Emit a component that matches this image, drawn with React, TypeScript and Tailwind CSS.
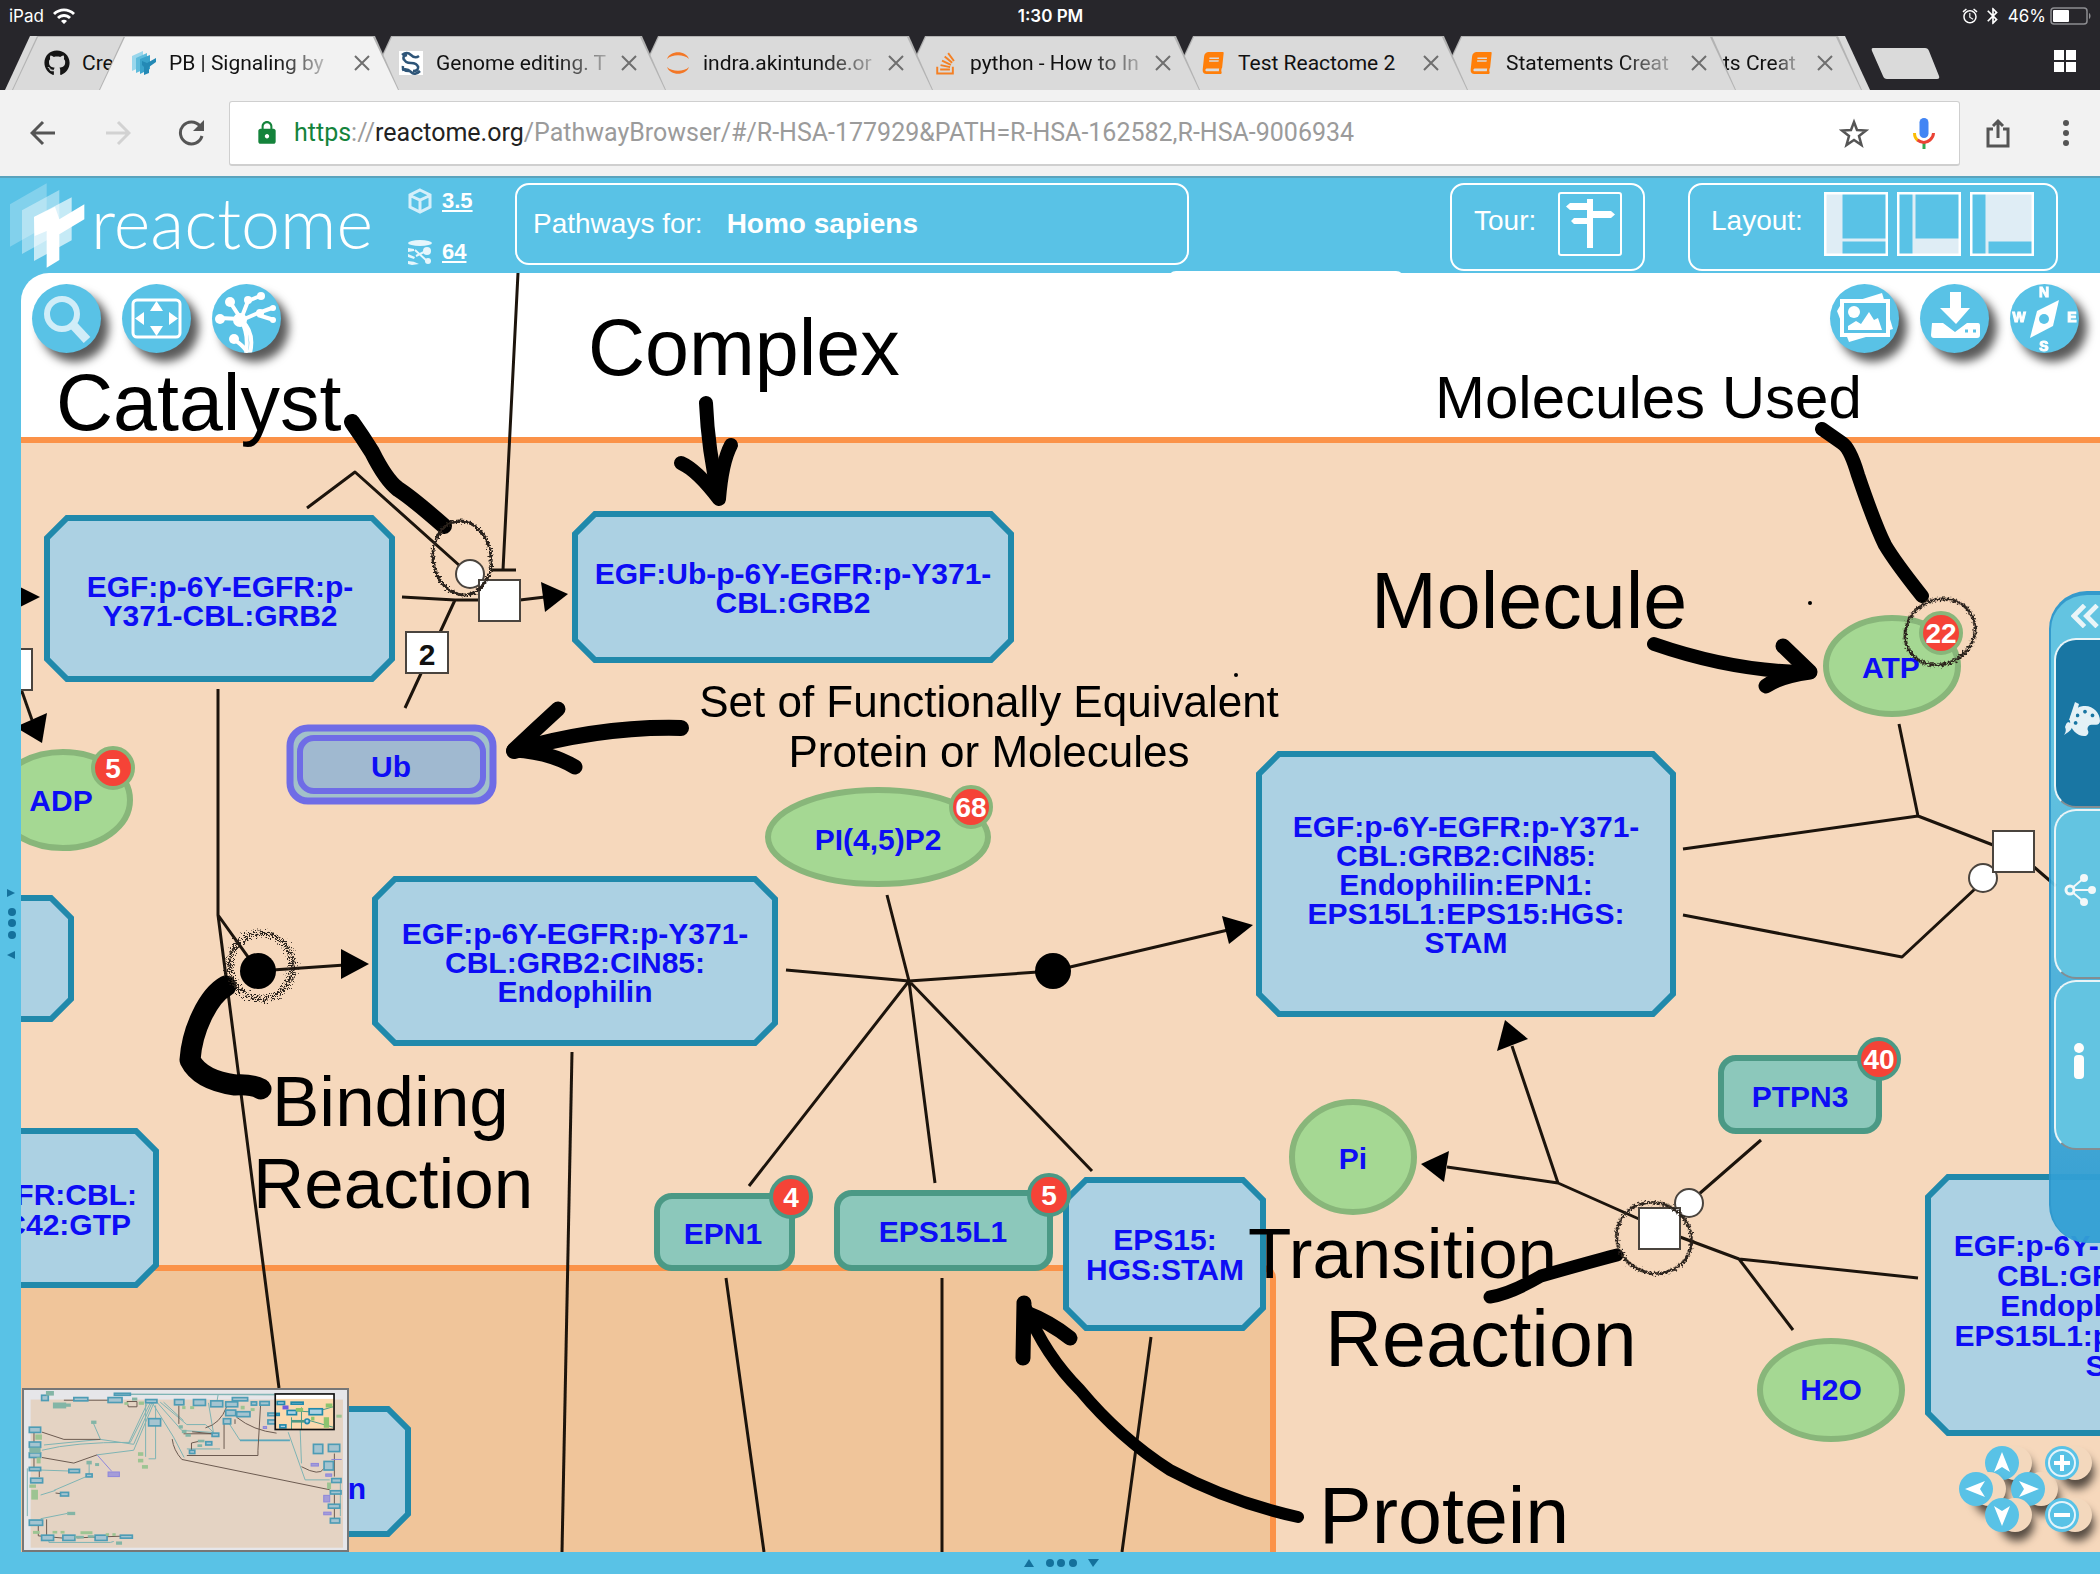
import React from "react";
import { FaGithub, FaStackOverflow, FaBook, FaPalette } from "react-icons/fa";
import { MdAlarm, MdBluetooth, MdLock, MdWifi } from "react-icons/md";

type Pt = [number, number];

/* ---------- Browser chrome ---------- */

function StatusBar() {
  return (
    <div className="flex h-9 items-center justify-between bg-[#27262b] px-2 pb-1 font-['Inter',sans-serif] text-[17px] leading-5 text-white">
      <div className="flex flex-1 items-center gap-2 pl-px">
        <span>iPad</span>
        <MdWifi className="size-6" />
      </div>
      <div className="font-semibold">1:30 PM</div>
      <div className="flex flex-1 items-center justify-end gap-1">
        <MdAlarm className="size-[18px]" />
        <MdBluetooth className="size-5" />
        <span className="pl-px">46%</span>
        <svg className="h-[18px] w-[42px]" viewBox="0 0 42 18" aria-label="Battery">
          <rect x="1" y="1" width="36" height="16" rx="3" fill="none" stroke="#8d8d91" strokeWidth="1.5" />
          <rect x="3" y="3" width="16" height="12" rx="1" fill="#fff" />
          <path d="M39 6c2 1 2 5 0 6z" fill="#8d8d91" />
        </svg>
      </div>
    </div>
  );
}

function CloseGlyph() {
  return (
    <svg className="size-4" viewBox="0 0 16 16" stroke="#6f6f6f" strokeWidth="2" aria-hidden="true">
      <path d="M1 1L15 15M15 1L1 15" />
    </svg>
  );
}

function LayersIcon({ className }: { className: string }) {
  return (
    <svg className={className} viewBox="0 0 26 26" aria-hidden="true">
      <path d="M1 6L12 1V16L1 21Z" fill="#9ad7ec" />
      <path d="M5 8L16 3V18L5 23Z" fill="#5fbcdc" />
      <path d="M9 9L19 5V19L9 24Z" fill="#3aa3cb" />
      <path d="M11 11L16 13L25 8V12L18 17V23L13 25V17L11 15Z" fill="#2489b5" />
    </svg>
  );
}

function HelixIcon() {
  return (
    <svg className="size-6 bg-white" viewBox="0 0 24 24" fill="none" stroke="#2e5578" strokeWidth="2.5" aria-hidden="true">
      <path d="M3 4Q8 0 12 4T20 5M5 9Q3 5 8 4M5 8Q6 12 12 12T19 16M19 15Q20 20 14 20M4 15Q3 20 10 20M3 19Q8 17 12 21T21 20" />
    </svg>
  );
}

function JupyterIcon() {
  return (
    <svg className="size-6" viewBox="0 0 24 24" fill="#f37726" aria-hidden="true">
      <path d="M1 8C4-1 20-1 23 8C18 3 6 3 1 8ZM1 16C4 25 20 25 23 16C18 21 6 21 1 16Z" />
    </svg>
  );
}

interface TabProps {
  title: string;
  icon?: React.ReactNode;
  active?: boolean;
  fade?: boolean;
  covered?: boolean;
  className: string;
}

function Tab({ title, icon, active, fade = true, covered, className }: TabProps) {
  return (
    <div className={"relative h-[54px] w-[300px] shrink-0 " + className}>
      <div className="absolute inset-0 bg-[#b3b3b3] [clip-path:polygon(25px_0,276px_0,100%_100%,0_100%)]" />
      <div
        className={
          "absolute inset-x-px bottom-0 top-px [clip-path:polygon(25px_0,273px_0,100%_100%,0_100%)] " +
          (active ? "bg-[#f2f2f2]" : "bg-[#dadada]")
        }
      />
      <div className={"relative flex h-full items-center pr-[29px] " + (covered ? "pl-[161px]" : "pl-8")}>
        <button aria-label={title} className="flex flex-1 items-center gap-3 text-left">
          {!covered && <span className="flex w-[26px] shrink-0 justify-center">{icon}</span>}
          <span
            className={
              "whitespace-nowrap text-[21px] leading-7 text-[#111] " +
              (fade ? "[mask-image:linear-gradient(to_right,black_70%,rgba(0,0,0,0.25)_100%)]" : "")
            }
          >
            {title}
          </span>
        </button>
        <button aria-label={"Close " + title}>
          <CloseGlyph />
        </button>
      </div>
    </div>
  );
}

function TabStrip() {
  const book = <FaBook className="size-[22px] -skew-x-6 text-[#ff7f0a]" />;
  return (
    <div className="flex h-[54px] items-start justify-between bg-[#27262b] pl-[5px]">
      <div className="flex">
        <div className="h-[54px] w-[300px] shrink-0 bg-[#dadada] [clip-path:polygon(25px_0,100%_0,100%_100%,0_100%)]" />
        <Tab className="-ml-[293px]" title="Cre" fade={false} icon={<FaGithub className="size-[26px] text-[#151515]" />} />
        <Tab className="z-10 -ml-[213px]" active title="PB | Signaling by" icon={<LayersIcon className="size-[26px]" />} />
        <Tab className="z-[9] -ml-[33px]" title="Genome editing. T" icon={<HelixIcon />} />
        <Tab className="z-[8] -ml-[33px]" title="indra.akintunde.or" icon={<JupyterIcon />} />
        <Tab className="z-[7] -ml-[33px]" title="python - How to In" icon={<FaStackOverflow className="size-[25px] text-[#f48024]" />} />
        <Tab className="z-[6] -ml-[32px]" title="Test Reactome 2" fade={false} icon={book} />
        <Tab className="z-[5] -ml-[32px]" title="Statements Creat" icon={book} />
        <Tab className="z-[4] -ml-[174px]" title="ts Creat" covered />
        <div className="-ml-[292px] h-[54px] w-[300px] shrink-0 bg-[#dadada] [clip-path:polygon(0_0,275px_0,100%_100%,0_100%)]" />
        <button aria-label="New tab" className="mt-3 h-[31px] w-[70px]">
          <svg viewBox="0 0 70 31" aria-hidden="true">
            <path d="M2 0H55Q58 0 59 3L69 28Q70 31 67 31H17Q14 31 13 28L2 3Q1 0 3 0Z" fill="#dadada" />
          </svg>
        </button>
      </div>
      <button aria-label="Show all tabs" className="mr-6 mt-[14px] grid size-[22px] grid-cols-2 gap-[2px]">
        <span className="bg-white" />
        <span className="bg-white" />
        <span className="bg-white" />
        <span className="bg-white" />
      </button>
    </div>
  );
}

function Toolbar() {
  return (
    <div className="flex h-[88px] items-center border-b-2 border-[#5aa3bd] bg-[#f2f2f2] pl-[30px] pr-[22px]">
      <button aria-label="Back" className="mr-[49px]">
        <svg className="size-[26px]" viewBox="0 0 26 26" fill="none" stroke="#555" strokeWidth="3" aria-hidden="true">
          <path d="M25 13H2M13 2L2 13L13 24" />
        </svg>
      </button>
      <button aria-label="Forward" className="mr-[47px]">
        <svg className="size-[26px]" viewBox="0 0 26 26" fill="none" stroke="#d2d2d2" strokeWidth="3" aria-hidden="true">
          <path d="M1 13H24M13 2L24 13L13 24" />
        </svg>
      </button>
      <button aria-label="Reload" className="mr-[25px]">
        <svg className="size-[26px]" viewBox="0 0 26 26" fill="none" aria-hidden="true">
          <path d="M22 6A11 11 0 1 0 24 16" stroke="#555" strokeWidth="3" />
          <path d="M26 0V11H15Z" fill="#555" />
        </svg>
      </button>
      <div className="relative flex h-[65px] flex-1 items-center rounded-[3px] border border-b-2 border-[#cfcfcf] bg-white pl-6 pr-[22px]">
        <MdLock className="mr-[14px] size-[26px] text-[#14833b]" />
        <span className="text-[25px] leading-8 text-[#9b9b9b]">
          <span className="text-[#14833b]">https</span>://<span className="text-[#222]">reactome.org</span>
          /PathwayBrowser/#/R-HSA-177929&amp;PATH=R-HSA-162582,R-HSA-9006934
        </span>
        <input aria-label="Address" className="absolute inset-y-0 left-16 right-36 bg-transparent outline-none" />
        <button aria-label="Bookmark" className="ml-auto mr-[42px]">
          <svg className="size-[30px]" viewBox="0 0 30 30" aria-hidden="true">
            <path d="M15 4L18 12L27 12.500L20 18L22.500 27L15 22L7.500 27L10 18L3 12.500L12 12Z" fill="none" stroke="#555" strokeWidth="2.500" />
          </svg>
        </button>
        <button aria-label="Voice search">
          <svg className="h-8 w-[26px]" viewBox="0 0 26 32" fill="none" aria-hidden="true">
            <rect x="8.500" y="1" width="9" height="20" rx="4.500" fill="#4285f4" />
            <path d="M13 26V32" stroke="#34a853" strokeWidth="3" />
            <path d="M3.500 16Q3.500 21 7 23.500" stroke="#fbbc05" strokeWidth="3" />
            <path d="M6.500 23Q13 28 19 23Q22.500 20 22.500 16" stroke="#ea4335" strokeWidth="3" />
          </svg>
        </button>
      </div>
      <button aria-label="Share" className="ml-[26px] mr-[44px]">
        <svg className="h-[30px] w-6" viewBox="0 0 24 30" fill="none" stroke="#555" strokeWidth="3" aria-hidden="true">
          <path d="M7 11H2V28H22V11H17M12 20V4M7 8L12 3L17 8" />
        </svg>
      </button>
      <button aria-label="Menu" className="flex w-6 flex-col items-center gap-[4px]">
        <span className="size-[6px] rounded-full bg-[#555]" />
        <span className="size-[6px] rounded-full bg-[#555]" />
        <span className="size-[6px] rounded-full bg-[#555]" />
      </button>
    </div>
  );
}

/* ---------- Reactome header ---------- */

function LayoutGlyph({ active }: { active: "left" | "bottom" | "main" }) {
  return (
    <svg className="size-16" viewBox="0 0 64 64" fill="none" aria-hidden="true">
      <rect x="1" y="1" width="16" height="62" fill={active === "left" ? "#dfedf5" : "none"} />
      <rect x="17" y="1" width="46" height="47" fill={active === "main" ? "#dfedf5" : "none"} />
      <rect x="17" y="49" width="46" height="14" fill={active === "bottom" ? "#dfedf5" : "none"} />
      <path d="M17 0V64M17 48H64" stroke="#dfedf5" strokeWidth="3" />
      <rect x="1" y="1" width="62" height="62" stroke="#fff" strokeWidth="3" />
    </svg>
  );
}

function Header() {
  return (
    <header className="flex h-[95px] items-start bg-[#59c2e6] pl-[10px] pr-[42px] pt-[5px] text-[28px] leading-8 text-white">
      <a href="#home" aria-label="reactome" className="flex w-[386px] items-start">
        <svg className="h-[86px] w-[75px]" viewBox="30 21 225 258" fill="#fff" aria-hidden="true">
          <path d="M30 85L140 22V150L30 212Z" opacity=".25" />
          <path d="M66 103L178 42V172L66 234Z" opacity=".4" />
          <path d="M102 123L215 64V193L102 255Z" opacity=".65" />
          <path d="M102 123L165 92L178 130L253 85V130L178 175V252L140 275V165L104 180Z" />
        </svg>
        <span className="pl-[6px] font-['Lato',sans-serif] text-[70px] font-light leading-[78px]">reactome</span>
      </a>
      <div className="flex w-[119px] flex-col gap-[23px] pl-[11px] pt-[4px] text-[22px] font-bold leading-7">
        <div className="flex items-center gap-[9px]">
          <svg className="size-[26px]" viewBox="0 0 26 26" fill="none" stroke="#d5effa" strokeWidth="3" aria-hidden="true">
            <path d="M13 2L23 7V19L13 24L3 19V7ZM4 8L13 12L22 8M13 12V23" />
          </svg>
          <a href="#version" className="underline">3.5</a>
        </div>
        <div className="flex items-center gap-[9px]">
          <svg className="size-[26px]" viewBox="0 0 26 26" fill="#e6f6fc" aria-hidden="true">
            <ellipse cx="13" cy="4" rx="12" ry="3" />
            <circle cx="20" cy="12" r="4" />
            <circle cx="21" cy="22" r="3" />
            <path d="M1 9L7 10V12L1 13ZM1 15L8 18L7 20L1 18ZM1 22Q7 22 12 25L5 26L1 25Z" />
            <path d="M8 11L20 22M19 12L9 17" stroke="#e6f6fc" strokeWidth="2" />
          </svg>
          <a href="#release" className="underline">64</a>
        </div>
      </div>
      <div className="flex h-[82px] w-[674px] items-center gap-[24px] rounded-[14px] border-2 border-white pl-[16px]">
        <span>Pathways for:</span>
        <b>Homo sapiens</b>
      </div>
      <div className="ml-auto flex h-[88px] w-[195px] items-start rounded-[14px] border-2 border-white pl-[22px] pt-[7px]">
        <span className="w-[84px] pt-[13px]">Tour:</span>
        <button aria-label="Start tour" className="size-16 rounded-[3px] border-2 border-white">
          <svg viewBox="0 0 60 60" fill="#fff" aria-hidden="true">
            <path d="M27 5H33V54H27ZM10 9H27V16H10L6 12.500ZM33 17H51L55 20.500L51 24H33ZM14 24H27V30H14L11 27Z" />
          </svg>
        </button>
      </div>
      <div className="ml-[43px] flex h-[88px] w-[370px] items-start rounded-[14px] border-2 border-white pl-[21px] pt-[7px]">
        <span className="w-[113px] pt-[13px]">Layout:</span>
        <div className="flex gap-[9px]">
          <button aria-label="Toggle side panel"><LayoutGlyph active="left" /></button>
          <button aria-label="Toggle details panel"><LayoutGlyph active="bottom" /></button>
          <button aria-label="Toggle viewport"><LayoutGlyph active="main" /></button>
        </div>
      </div>
    </header>
  );
}

/* ---------- Pathway diagram ---------- */

function Label({ x, y, lines, gap = 29, anchor = "middle" }: { x: number; y: number; lines: string[]; gap?: number; anchor?: "start" | "middle" | "end" }) {
  return (
    <g className="text-[30px] font-bold" fill="#0d0df5" textAnchor={anchor}>
      {lines.map((line, i) => (
        <text key={line} x={x} y={y + i * gap}>{line}</text>
      ))}
    </g>
  );
}

function Complex({ l, t, r, b }: { l: number; t: number; r: number; b: number }) {
  const c = 20;
  const [x1, y1, x2, y2] = [l + 3, t + 3, r - 3, b - 3];
  const pts: Pt[] = [[x1 + c, y1], [x2 - c, y1], [x2, y1 + c], [x2, y2 - c], [x2 - c, y2], [x1 + c, y2], [x1, y2 - c], [x1, y1 + c]];
  return <polygon points={pts.join(" ")} fill="#acd1e3" stroke="#2089ab" strokeWidth="6" />;
}

function Chemical({ cx, cy, rx, ry }: { cx: number; cy: number; rx: number; ry: number }) {
  return <ellipse cx={cx} cy={cy} rx={rx - 3} ry={ry - 3} fill="#a5d893" stroke="#88b67a" strokeWidth="6" />;
}

function Protein({ l, t, r, b }: { l: number; t: number; r: number; b: number }) {
  return <rect x={l + 3} y={t + 3} width={r - l - 6} height={b - t - 6} rx="15" fill="#8cc8bb" stroke="#4b9985" strokeWidth="6" />;
}

function Badge({ cx, cy, n, ring = "#88b67a" }: { cx: number; cy: number; n: number; ring?: string }) {
  return (
    <g>
      <circle cx={cx} cy={cy} r="20" fill="#f54337" stroke={ring} strokeWidth="4" />
      <text x={cx} y={cy + 10} textAnchor="middle" fill="#fff" className="text-[28px] font-bold">{n}</text>
    </g>
  );
}

const edges = [
  "M518 273L503 570M491 570H516",
  "M307 508L355 472L460 566",
  "M402 597L455 600H520L545 597M455 600L405 708",
  "M20 686L32 720",
  "M218 689V915L279 1388M218 915L258 971L345 965",
  "M572 1052L562 1552",
  "M786 970L909 981L1053 971L1228 930M887 895L909 981M909 981L749 1186M909 981L935 1183M909 981L1092 1171",
  "M726 1278L764 1552M942 1278V1552M1151 1337L1122 1552",
  "M1683 849L1918 816L1993 845M1899 724L1918 816M2034 867L2056 886",
  "M1976 888L1902 957L1683 915",
  "M1512 1046L1558 1183L1639 1219M1447 1167L1558 1183",
  "M1699 1194L1761 1140M1680 1237L1739 1259L1918 1278M1739 1259L1793 1330",
];

const arrowHeads = [
  "M541 582L545 612L568 594Z",
  "M10 582V612L40 597Z",
  "M47 713L15 727L42 743Z",
  "M341 949V979L369 964Z",
  "M1222 916L1229 944L1253 925Z",
  "M1505 1020L1497 1051L1528 1039Z",
  "M1421 1164L1449 1151L1444 1182Z",
];

const inkStrokes: { d: string; w: number }[] = [
  { d: "M352 422Q362 436 372 452Q386 480 398 489Q412 498 444 526", w: 16 },
  { d: "M706 403Q708 450 719 497", w: 14 },
  { d: "M681 463Q697 470 719 499M731 445Q722 462 719 499", w: 14 },
  { d: "M681 728Q600 726 514 751", w: 16 },
  { d: "M558 709Q535 730 514 750Q550 752 575 767", w: 15 },
  { d: "M1822 429L1842 443Q1850 448 1858 475Q1875 525 1885 545Q1895 562 1922 596", w: 14 },
  { d: "M1654 644Q1735 672 1810 672", w: 14 },
  { d: "M1783 646L1810 672Q1780 676 1766 686", w: 15 },
  { d: "M226 986C208 996 192 1030 190 1060Q200 1080 235 1085Q252 1084 261 1089", w: 21 },
  { d: "M1490 1297Q1510 1294 1541 1276Q1590 1262 1617 1255", w: 13 },
  { d: "M1298 1517Q1230 1502 1170 1470Q1120 1438 1080 1390Q1045 1355 1026 1308", w: 12 },
  { d: "M1024 1303L1023 1358M1024 1312Q1050 1322 1070 1338", w: 15 },
];

function PathwayDiagram() {
  return (
    <svg
      className="absolute inset-0 size-full"
      viewBox="21 273 2079 1279"
      preserveAspectRatio="xMinYMin slice"
      role="img"
      aria-label="Signaling by EGFR pathway diagram"
    >
      <defs>
        <filter id="scribble" x="-20%" y="-20%" width="140%" height="140%">
          <feTurbulence type="fractalNoise" baseFrequency="0.5" numOctaves="2" seed="4" />
          <feDisplacementMap in="SourceGraphic" scale="7" xChannelSelector="R" yChannelSelector="G" />
        </filter>
        <filter id="charcoal" x="-20%" y="-20%" width="140%" height="140%">
          <feTurbulence type="fractalNoise" baseFrequency="0.7" numOctaves="2" seed="9" />
          <feDisplacementMap in="SourceGraphic" scale="18" xChannelSelector="R" yChannelSelector="G" />
        </filter>
      </defs>

      <rect x="0" y="440" width="2120" height="1200" fill="#f6d8bc" stroke="#fb9248" strokeWidth="6" />
      <rect x="0" y="1268" width="1273" height="340" rx="10" fill="#f0c59a" stroke="#fb9248" strokeWidth="6" />

      <g fill="none" stroke="#1c140c" strokeWidth="3" strokeLinejoin="round">
        {edges.map((d) => <path key={d} d={d} />)}
      </g>
      <g fill="#000">
        {arrowHeads.map((d) => <path key={d} d={d} />)}
        <circle cx="258" cy="971" r="18" />
        <circle cx="1053" cy="971" r="18" />
      </g>
      <g fill="#fff" stroke="#4a443e" strokeWidth="2">
        <circle cx="470" cy="574" r="14" />
        <rect x="479" y="580" width="41" height="41" />
        <rect x="406" y="632" width="42" height="41" />
        <rect x="-8" y="649" width="40" height="41" />
        <circle cx="1983" cy="878" r="14" />
        <rect x="1993" y="831" width="41" height="41" />
        <circle cx="1689" cy="1203" r="14" />
        <rect x="1639" y="1208" width="41" height="41" />
      </g>
      <text x="427" y="665" textAnchor="middle" className="text-[30px] font-bold" fill="#111">2</text>

      <Complex l={44} t={515} r={395} b={682} />
      <Label x={220} y={597} lines={["EGF:p-6Y-EGFR:p-", "Y371-CBL:GRB2"]} />
      <Complex l={572} t={511} r={1014} b={663} />
      <Label x={793} y={584} lines={["EGF:Ub-p-6Y-EGFR:p-Y371-", "CBL:GRB2"]} />
      <Complex l={372} t={876} r={778} b={1046} />
      <Label x={575} y={944} lines={["EGF:p-6Y-EGFR:p-Y371-", "CBL:GRB2:CIN85:", "Endophilin"]} />
      <Complex l={1256} t={751} r={1676} b={1017} />
      <Label x={1466} y={837} lines={["EGF:p-6Y-EGFR:p-Y371-", "CBL:GRB2:CIN85:", "Endophilin:EPN1:", "EPS15L1:EPS15:HGS:", "STAM"]} />
      <Complex l={1925} t={1174} r={2330} b={1436} />
      <Label x={2127} y={1256} gap={30} lines={["EGF:p-6Y-EGFR:p-Y371-", "CBL:GRB2:CIN85:", "Endophilin:EPN1:", "EPS15L1:p-EPS15:HGS:", "STAM"]} />
      <Complex l={-120} t={895} r={74} b={1022} />
      <Complex l={-120} t={1128} r={159} b={1288} />
      <Label x={137} y={1205} gap={30} lines={["EGFR:CBL:"]} anchor="end" />
      <Label x={131} y={1235} lines={["CDC42:GTP"]} anchor="end" />
      <Complex l={100} t={1406} r={411} b={1537} />
      <Label x={366} y={1499} lines={["Endophilin"]} anchor="end" />

      <Protein l={654} t={1193} r={795} b={1271} />
      <Label x={723} y={1244} lines={["EPN1"]} />
      <Protein l={834} t={1190} r={1053} b={1271} />
      <Label x={943} y={1242} lines={["EPS15L1"]} />
      <Protein l={1718} t={1055} r={1882} b={1134} />
      <Label x={1800} y={1107} lines={["PTPN3"]} />
      <Complex l={1063} t={1177} r={1266} b={1331} />
      <Label x={1165} y={1250} gap={30} lines={["EPS15:", "HGS:STAM"]} />
      <Badge cx={791} cy={1197} n={4} ring="#4b9985" />
      <Badge cx={1049} cy={1195} n={5} ring="#4b9985" />
      <Badge cx={1879} cy={1059} n={40} ring="#4b9985" />

      <rect x="290" y="728" width="203" height="73" rx="18" fill="#a2c1c9" stroke="#6f6ce6" strokeWidth="7" />
      <rect x="300" y="738" width="183" height="53" rx="14" fill="#a0b9d0" stroke="#6f6ce6" strokeWidth="6" />
      <Label x={391} y={777} lines={["Ub"]} />

      <Chemical cx={63} cy={800} rx={70} ry={51} />
      <Label x={61} y={811} lines={["ADP"]} />
      <Badge cx={113} cy={768} n={5} />
      <Chemical cx={878} cy={837} rx={113} ry={50} />
      <Label x={878} y={850} lines={["PI(4,5)P2"]} />
      <Badge cx={971} cy={807} n={68} />
      <Chemical cx={1892} cy={666} rx={69} ry={51} />
      <Label x={1891} y={678} lines={["ATP"]} />
      <Badge cx={1941} cy={633} n={22} />
      <Chemical cx={1353} cy={1157} rx={64} ry={58} />
      <Label x={1353} y={1169} lines={["Pi"]} />
      <Chemical cx={1831} cy={1390} rx={74} ry={52} />
      <Label x={1831} y={1400} lines={["H2O"]} />

      <g fill="none" stroke="#000" strokeLinecap="round" strokeLinejoin="round">
        {inkStrokes.map(({ d, w }) => <path key={d} d={d} strokeWidth={w} />)}
      </g>
      <g fill="none" stroke="#2b221b" strokeWidth="3" filter="url(#scribble)">
        <ellipse cx="462" cy="558" rx="29" ry="37" transform="rotate(-8 462 558)" />
        <ellipse cx="1940" cy="632" rx="36" ry="32" transform="rotate(-30 1940 632)" />
        <ellipse cx="1654" cy="1238" rx="38" ry="35" transform="rotate(25 1654 1238)" />
      </g>
      <g fill="none" stroke="#2b221b" filter="url(#charcoal)">
        <ellipse cx="261" cy="966" rx="31" ry="33" strokeWidth="3" />
        <ellipse cx="261" cy="966" rx="34" ry="33" strokeWidth="1" />
      </g>
      <g fill="#000">
        <circle cx="1236" cy="675" r="2" />
        <circle cx="1810" cy="603" r="2" />
        <circle cx="366" cy="1109" r="2" />
        <g className="text-[79px]">
          <text x="56" y="430">Catalyst</text>
          <text x="588" y="375">Complex</text>
          <text x="1371" y="628">Molecule</text>
          <text x="1325" y="1366">Reaction</text>
          <text x="1319" y="1543">Protein</text>
        </g>
        <text x="1435" y="418" className="text-[60px]">Molecules Used</text>
        <g className="text-[44px]" textAnchor="middle">
          <text x="989" y="717">Set of Functionally Equivalent</text>
          <text x="989" y="767">Protein or Molecules</text>
        </g>
        <g className="text-[71px]">
          <text x="272" y="1126">Binding</text>
          <text x="253" y="1208">Reaction</text>
          <text x="1248" y="1278">Transition</text>
        </g>
      </g>
    </svg>
  );
}

/* ---------- Minimap ---------- */

const miniBlue: [number, number, number, number][] = [
  [123, 73, 20, 16], [220, 80, 42, 10], [323, 80, 42, 15], [342, 67, 48, 6], [436, 86, 34, 10], [445, 144, 36, 22], [523, 86, 28, 16],
  [580, 86, 36, 18], [632, 90, 36, 18], [677, 93, 36, 15], [697, 80, 46, 10], [677, 118, 30, 17], [710, 123, 40, 15], [670, 144, 22, 16],
  [754, 93, 16, 10], [780, 92, 28, 11], [804, 127, 32, 8], [804, 148, 36, 12], [86, 170, 34, 16], [86, 215, 34, 16], [86, 248, 34, 14],
  [86, 292, 34, 10], [90, 325, 36, 14], [86, 452, 40, 16], [205, 298, 32, 10], [257, 312, 18, 9], [180, 368, 24, 11], [123, 498, 36, 16],
  [187, 498, 36, 16], [284, 498, 36, 16], [360, 498, 36, 9], [636, 188, 20, 10], [617, 214, 18, 10], [568, 240, 16, 10],
  [941, 222, 28, 28], [986, 222, 34, 22], [973, 274, 28, 26], [996, 326, 28, 12], [992, 363, 32, 10], [986, 404, 34, 12], [992, 447, 28, 14],
];
const miniGreen: [number, number, number, number][] = [
  [546, 106, 10, 9], [570, 106, 12, 9], [722, 105, 12, 11], [752, 112, 12, 9], [104, 192, 20, 16], [108, 262, 12, 18], [413, 246, 16, 11],
  [413, 266, 16, 11], [425, 285, 18, 11], [86, 344, 20, 10], [92, 360, 20, 30], [97, 485, 20, 9], [156, 485, 14, 8], [180, 485, 12, 8],
  [240, 486, 36, 9], [316, 492, 10, 8], [336, 492, 10, 8], [415, 92, 16, 10], [372, 94, 12, 8], [982, 338, 12, 20], [1010, 132, 16, 9],
];
const miniTeal: [number, number, number, number][] = [
  [136, 60, 24, 14], [157, 95, 40, 18], [195, 98, 16, 10], [272, 150, 16, 10], [258, 272, 16, 11], [284, 279, 12, 9], [200, 427, 24, 10],
  [536, 164, 12, 10], [545, 178, 14, 10], [556, 190, 16, 9], [593, 208, 20, 8], [592, 222, 14, 8], [347, 517, 18, 10], [222, 500, 28, 8],
  [262, 498, 18, 8], [395, 80, 16, 9], [86, 232, 34, 16],
];

function Minimap() {
  return (
    <div className="absolute bottom-0 left-px">
      <svg className="h-[164px] w-[327px] border-2 border-[#777] bg-[#e6e6e9]" viewBox="70 57 972 486" preserveAspectRatio="none" role="img" aria-label="Pathway thumbnail">
        <rect x="90" y="86" width="940" height="450" fill="#e4d3c3" />
        <g fill="none" stroke="#7db3b3" strokeWidth="3">
          <path d="M124 240Q220 215 390 216L450 96M130 224L300 207L400 222L455 96M290 254L400 240L460 98M384 220L440 100M466 104V266H445M436 98V260M456 96L520 200L552 262M470 94L545 180L640 186M480 94L560 162H616L640 186M490 94L550 150M340 517L330 520H145V510M116 300L204 303M160 362L262 318M120 376L165 362M120 448L200 432M278 156L300 207M266 318V282M688 160L720 210M720 210H870M865 185L916 330H990M900 150L905 280M345 70H870M390 70L870 72M654 72L650 96M625 96L640 186M80 295V440M660 236H560M1022 340V440" />
        </g>
        <path d="M720 210H870" stroke="#5ba7bb" strokeWidth="5" />
        <g fill="none" stroke="#6b5a50" strokeWidth="3">
          <path d="M124 185L190 207H300M124 262L220 279L290 254M190 88H330M536 104V160M516 206Q520 240 545 268L990 360M550 190H636M560 256H774V240L782 100M616 172Q660 160 680 108M705 146V160M710 140Q760 180 830 188M672 236V160M100 186V215M100 262V292M116 300V322M138 450V498M113 470V500L200 508M230 506L390 500M574 240V218L600 212M905 290Q960 320 972 296M1004 250V320M1004 370V450M380 92H410V108H384ZM165 370L200 374M576 184L636 190" />
        </g>
        <path d="M290 254L334 304M995 268H1026" stroke="#8d86dc" strokeWidth="3" />
        <g fill="#a5c4d0" stroke="#4d9cb5" strokeWidth="5">
          {miniBlue.map(([x, y, w, h]) => <rect key={x + "-" + y} x={x} y={y} width={w} height={h} />)}
        </g>
        <g fill="#9cc492">
          {miniGreen.map(([x, y, w, h]) => <rect key={x + "-" + y} x={x} y={y} width={w} height={h} />)}
        </g>
        <g fill="#83b5a6">
          {miniTeal.map(([x, y, w, h]) => <rect key={x + "-" + y} x={x} y={y} width={w} height={h} />)}
        </g>
        <g fill="#a49cd8" stroke="#8d86dc" strokeWidth="3">
          <rect x="323" y="306" width="34" height="14" />
          <rect x="934" y="280" width="22" height="8" />
          <rect x="790" y="168" width="10" height="6" />
          <rect x="978" y="312" width="18" height="7" />
          <rect x="972" y="377" width="18" height="20" />
          <rect x="972" y="428" width="22" height="8" />
        </g>
        <rect x="827" y="70" width="175" height="107" fill="#fbd9ae" />
        <rect x="827" y="70" width="175" height="14" fill="#fff" />
        <path d="M905 110V177M875 140V177M930 150L1000 170M880 120L940 124M966 118L1000 108" fill="none" stroke="#4b9985" strokeWidth="3" />
        <g fill="#acd1e3" stroke="#2089ab" strokeWidth="5">
          <rect x="832" y="92" width="22" height="9" />
          <rect x="874" y="94" width="36" height="6" />
          <rect x="862" y="119" width="28" height="13" />
          <rect x="928" y="114" width="40" height="18" />
          <rect x="830" y="128" width="8" height="6" />
          <rect x="840" y="163" width="18" height="9" />
          <circle cx="922" cy="152" r="7" />
        </g>
        <path d="M888 112H910V122H888ZM978 98H998V110H978ZM934 138H944V150H934ZM972 140H988V172H972Z" fill="#8cc46e" />
        <path d="M876 148H914V156H876Z" fill="#4b9985" />
        <rect x="848" y="104" width="18" height="12" fill="#6f5ce0" />
        <rect x="826" y="69" width="177" height="108" fill="none" stroke="#111" strokeWidth="5" />
      </svg>
    </div>
  );
}

/* ---------- Floating controls ---------- */

function RoundButton({ label, children }: { label: string; children: React.ReactNode }) {
  return (
    <button aria-label={label} className="size-[69px] overflow-hidden rounded-full bg-[#59c2e6] shadow-[8px_9px_10px_rgba(0,0,0,0.65)]">
      <svg viewBox="0 0 69 69" fill="none" aria-hidden="true">{children}</svg>
    </button>
  );
}

function TopControls() {
  return (
    <>
      <div className="absolute left-[11px] top-[11px] flex gap-[21px]">
        <RoundButton label="Search">
          <circle cx="30" cy="30" r="15" stroke="#d0edf8" strokeWidth="6" />
          <path d="M42 42L55 56" stroke="#d0edf8" strokeWidth="9" />
        </RoundButton>
        <RoundButton label="Fit to screen">
          <rect x="11" y="16" width="47" height="37" rx="4" stroke="#fff" strokeWidth="3" />
          <path d="M34.500 17L41 27H28ZM34.500 52L41 42H28ZM13 34.500L22 28V41ZM56 34.500L47 28V41Z" fill="#fff" />
        </RoundButton>
        <RoundButton label="Open pathway overview">
          <path d="M34 69Q37 50 29 36M36 69Q30 60 22 56M29 35L18 18M29 35L36 17L48 12M29 35L7 34M30 36L46 29L60 24M46 31L62 36M29 36Q43 48 38 69" stroke="#fff" strokeWidth="4" />
          <g fill="#fff">
            <circle cx="18" cy="18" r="5" /><circle cx="36" cy="16" r="4" /><circle cx="49" cy="12" r="4" /><circle cx="8" cy="35" r="5" />
            <circle cx="28" cy="36" r="7" /><circle cx="48" cy="29" r="4" /><circle cx="61" cy="24" r="3" /><circle cx="61" cy="36" r="3" /><circle cx="22" cy="55" r="5" />
          </g>
        </RoundButton>
      </div>
      <div className="absolute right-[21px] top-[11px] flex gap-[21px]">
        <RoundButton label="Illustrations">
          <path d="M10 22L52 9L63 45L19 58L7 27Z" fill="#fff" />
          <rect x="12" y="17" width="46" height="34" fill="#59c2e6" stroke="#fff" strokeWidth="4" />
          <circle cx="24" cy="28" r="6" fill="#fff" />
          <path d="M18 46V42L26 37L31 40L39 28L44 36L48 34L52 46Z" fill="#fff" />
        </RoundButton>
        <RoundButton label="Download">
          <path d="M30 8H41V24H50L36 40L20 24H30Z" fill="#fff" />
          <path d="M12 39H23L35 48L47 39H58Q60 39 60 42V51Q60 54 57 54H14Q11 54 11 51Z" fill="#fff" />
          <path d="M45 47H48M53 47H56" stroke="#59c2e6" strokeWidth="3" />
        </RoundButton>
        <RoundButton label="Compass">
          <path d="M49 16L43 42L20 54L27 27Z" fill="#fff" />
          <circle cx="34" cy="35" r="5" fill="#59c2e6" />
          <g fill="#fff" stroke="#fff" textAnchor="middle" className="text-[14px] font-bold">
            <text x="34" y="13">N</text><text x="34" y="67">S</text><text x="9" y="38">W</text><text x="62" y="38">E</text>
          </g>
        </RoundButton>
      </div>
    </>
  );
}

const padButtons = [
  { label: "Move up", cell: "col-start-2 row-start-1", d: "M17 6L25 26L17 21L9 26Z" },
  { label: "Move left", cell: "col-start-1 row-start-2", d: "M6 17L26 9L21 17L26 25Z" },
  { label: "Move right", cell: "col-start-3 row-start-2", d: "M28 17L8 9L13 17L8 25Z" },
  { label: "Move down", cell: "col-start-2 row-start-3", d: "M17 28L25 8L17 13L9 8Z" },
  { label: "Zoom in", cell: "col-start-4 row-start-1", d: "M15 9H19V15H25V19H19V25H15V19H9V15H15Z" },
  { label: "Zoom out", cell: "col-start-4 row-start-3", d: "M9 15H25V19H9Z" },
];

function NavPad() {
  return (
    <div className="absolute bottom-6 right-[17px] grid grid-cols-[26px_26px_26px_42px] grid-rows-[26px_26px_26px] place-items-center">
      {padButtons.map(({ label, cell, d }) => (
        <button
          key={label}
          aria-label={label}
          className={"size-[34px] rounded-full bg-[#59c2e6] shadow-[13px_0_0_#f3d8bd,15px_9px_8px_rgba(0,0,0,0.65)] " + cell}
        >
          <svg viewBox="0 0 34 34" fill="#fff" aria-hidden="true">
            {label.startsWith("Zoom") && <circle cx="17" cy="17" r="13" fill="none" stroke="#e4f4fb" strokeWidth="2" />}
            <path d={d} />
          </svg>
        </button>
      ))}
    </div>
  );
}

function SidePanel() {
  const tab = "flex h-[170px] w-full items-center pl-2 rounded-l-[22px] border-2 border-r-0 border-[#e9f6fb] border-b-[#7d8a90]";
  return (
    <div className="absolute right-0 top-[318px] flex h-[652px] w-[51px] flex-col gap-px rounded-l-[38px] border-l-2 border-t-4 border-[#2a97cd] bg-linear-to-b from-[#5cc3e3] from-20% via-[#4fb6de] via-50% to-[#32a0d5] to-90% pl-[3px] opacity-95">
      <button aria-label="Expand panel" className="flex h-[42px] items-center pl-[17px]">
        <svg className="h-6 w-[30px]" viewBox="0 0 30 24" fill="none" stroke="#eaf7fc" strokeWidth="5" aria-hidden="true">
          <path d="M14 1L3 12L14 23M27 1L16 12L27 23" />
        </svg>
      </button>
      <button aria-label="Colour profiles" className={tab + " bg-[#0e71a2] pb-2"}>
        <span className="flex items-end">
          <svg className="-mr-[10px] h-[34px] w-4" viewBox="0 0 16 34" fill="#e4f3fa" aria-hidden="true">
            <path d="M11 0L15 2L10 20L5 18ZM4 20L9 22Q9 28 0 33Q3 29 1 25Q2 21 4 20Z" />
          </svg>
          <FaPalette className="size-[30px] text-[#e4f3fa]" />
        </span>
      </button>
      <button aria-label="Interactors" className={tab + " bg-[#5cc3e3] pb-2"}>
        <svg className="size-8" viewBox="0 0 32 32" fill="#f2fafd" stroke="#f2fafd" strokeWidth="2" aria-hidden="true">
          <path d="M7 16H28M7 15L20 4M7 17L20 28" />
          <circle cx="6" cy="16" r="4" fill="#5cc3e3" strokeWidth="3" />
          <circle cx="28" cy="16" r="3" /><circle cx="20" cy="4" r="3" /><circle cx="20" cy="28" r="3" />
        </svg>
      </button>
      <button aria-label="About" className={tab + " bg-[#5cc3e3] pb-2"}>
        <svg className="h-9 w-8" viewBox="0 0 32 36" fill="#fff" aria-hidden="true">
          <circle cx="15" cy="5" r="5" />
          <rect x="10" y="12" width="10" height="24" rx="4" />
        </svg>
      </button>
    </div>
  );
}

/* ---------- Split handles ---------- */

function SplitHandle({ vertical }: { vertical?: boolean }) {
  return vertical ? (
    <svg className="h-[74px] w-4" viewBox="0 0 16 74" fill="#14719c" aria-hidden="true">
      <path d="M4 2L12 6L4 10ZM12 64L4 68L12 72Z" />
      <circle cx="9" cy="25" r="4" /><circle cx="9" cy="36" r="4" /><circle cx="9" cy="48" r="4" />
    </svg>
  ) : (
    <svg className="h-4 w-[78px]" viewBox="0 0 78 16" fill="#14719c" aria-hidden="true">
      <path d="M2 12L7 4L12 12ZM66 4H77L71 12Z" />
      <circle cx="28" cy="8" r="4" /><circle cx="39" cy="8" r="4" /><circle cx="51" cy="8" r="4" />
    </svg>
  );
}

export default function App() {
  return (
    <div className="flex min-h-screen flex-col bg-[#59c2e6] font-['Liberation_Sans',Arial,sans-serif]">
      <div className="font-['Roboto',sans-serif]">
        <StatusBar />
        <TabStrip />
        <Toolbar />
      </div>
      <Header />
      <main className="flex flex-1">
        <div className="flex w-[21px] items-center justify-center">
          <SplitHandle vertical />
        </div>
        <div className="flex flex-1 flex-col">
          <div className="relative min-h-[1100px] flex-1">
            <div className="absolute -top-[2px] left-[1147px] h-2 w-[236px] rounded-t-lg bg-white" />
            <div className="absolute inset-0 overflow-hidden rounded-tl-[28px] bg-white">
              <PathwayDiagram />
              <TopControls />
              <SidePanel />
              <Minimap />
              <NavPad />
            </div>
          </div>
          <div className="flex h-[22px] items-center justify-center">
            <SplitHandle />
          </div>
        </div>
      </main>
    </div>
  );
}
